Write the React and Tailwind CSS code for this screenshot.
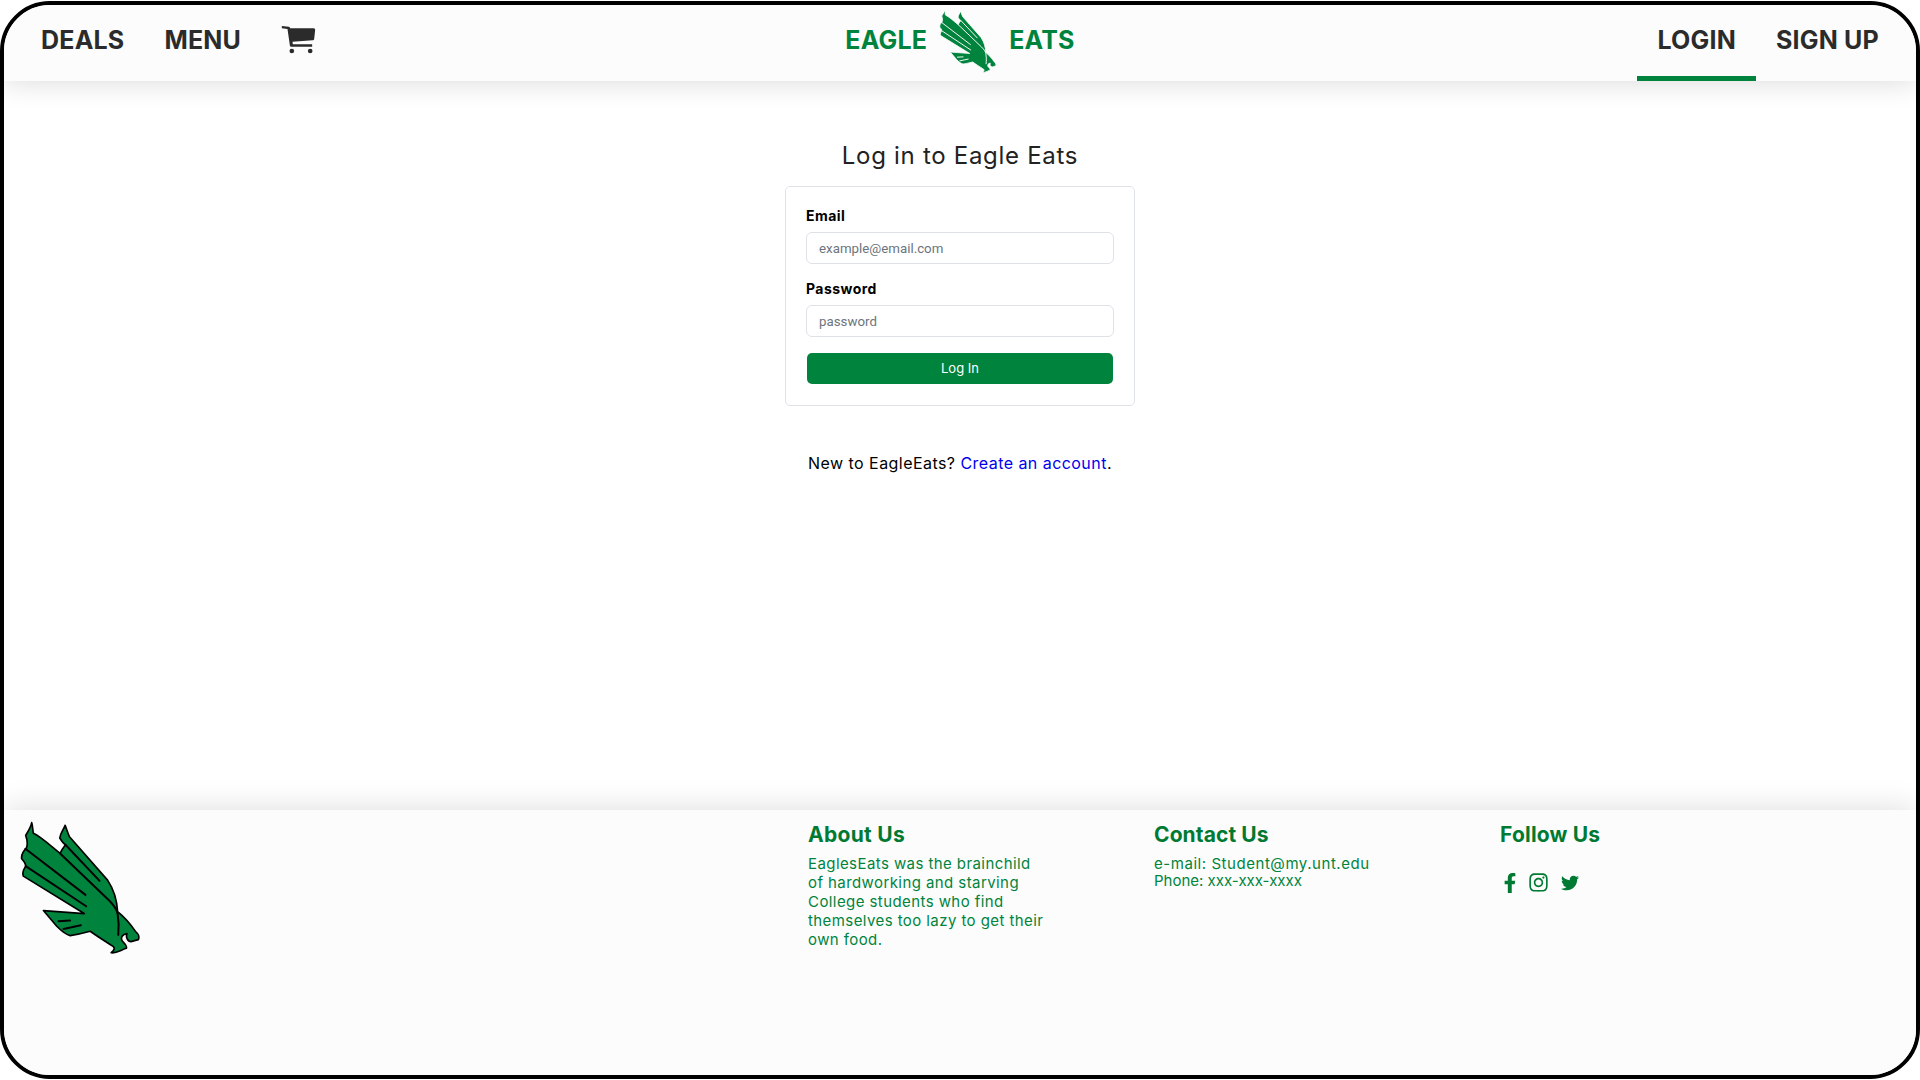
import React from 'react';
import { FaFacebookF, FaInstagram, FaTwitter } from 'react-icons/fa';

const bodyPath =
  'M65 20 C62 35 55 45 47 58 C52 72 54 84 49 96 C40 105 33 115 35 128 C42 136 47 142 47 150 C40 160 36 170 40 180 L222 292 L100 283 L140 330 C152 342 165 355 180 358 C200 355 222 350 240 345 C258 358 280 372 302 386 C314 392 316 398 303 409 C316 412 330 402 348 396 C352 390 344 382 336 374 C330 364 336 354 350 352 C346 362 352 376 362 376 L384 370 C388 362 384 352 376 346 C362 325 342 302 322 286 C320 250 312 222 292 192 L178 62 C172 50 170 40 165 28 C160 42 150 52 149 66 C155 76 162 84 166 86 C160 94 154 102 150 112 C120 88 92 62 70 52 C68 42 68 30 65 20 Z';

const Eagle = ({ className, lineClass }) => (
  <svg viewBox="30 15 362 398" className={className}>
    <path d={bodyPath} fill="#00843d" className={lineClass} strokeWidth="5" strokeLinejoin="round" />
    <g fill="none" className={lineClass} strokeWidth="6" strokeLinecap="round">
      <path d="M46 98 L226 236" />
      <path d="M47 150 L228 270" />
      <path d="M150 112 L296 252 C312 268 320 280 322 292 C326 315 326 335 324 356" />
      <path d="M166 86 L268 194" />
      <path d="M145 315 L180 313" />
      <path d="M160 338 L212 327" />
    </g>
  </svg>
);

const CartIcon = () => (
  <svg viewBox="0 0 110 90" className="w-[37px] h-[30px] fill-[#2b2b2b]">
    <path d="M5 3 L26 5 C29 6 30 8 30 10 L100 10 C104 10 105 13 105 15 L102 42 C101 45 100 46 97 46 L37 50 L38 58 L96 58 L96 65 L33 65 C30 65 29 63 29 61 L22 12 L5 10 Z" />
    <circle cx="35" cy="78" r="7" />
    <circle cx="90" cy="78" r="7" />
  </svg>
);

const NavLink = ({ children, active }) => (
  <a
    href="#"
    className={`flex items-center h-full px-5 pt-px text-[25px] font-bold tracking-[0.2px] text-[#2b2b2b] border-b-[5px] ${
      active ? 'border-[#00843d]' : 'border-transparent'
    }`}
  >
    {children}
  </a>
);

const Field = ({ label, placeholder, type }) => (
  <div>
    <label className="block text-[14px] leading-[20px] font-bold tracking-[0.45px] text-black mb-[6px]">{label}</label>
    <input
      type={type}
      placeholder={placeholder}
      className="block w-full h-[32px] px-3 text-[13.3px] bg-white border border-[#dee2e6] rounded-[6px] placeholder:text-[#6c757d] font-['Roboto',sans-serif]"
    />
  </div>
);

export default function App() {
  return (
    <div className="w-full h-screen bg-white py-px font-['Inter',sans-serif]">
      <div className="h-full flex flex-col border-[4px] border-black rounded-[50px] overflow-hidden bg-white">
        {/* Header */}
        <header className="relative z-10 grid grid-cols-[1fr_auto_1fr] items-center h-[76px] bg-[#fcfcfc] shadow-[0_0_30px_rgba(0,0,0,0.16)]">
          <nav className="flex items-center h-full pl-[17px]">
            <NavLink>DEALS</NavLink>
            <NavLink>MENU</NavLink>
            <a href="#" className="pl-[19px] pb-[6px]">
              <CartIcon />
            </a>
          </nav>
          <div className="flex items-center gap-3 pb-[4px] text-[25px] font-bold tracking-[0.2px] text-[#00843d]">
            <span>EAGLE</span>
            <Eagle className="w-[58px] h-[64px]" lineClass="stroke-[#fcfcfc]" />
            <span>EATS</span>
          </div>
          <nav className="flex items-center justify-end h-full pr-[17px]">
            <NavLink active>LOGIN</NavLink>
            <NavLink>SIGN UP</NavLink>
          </nav>
        </header>

        {/* Login form */}
        <main className="flex-1 flex flex-col items-center pt-[58px] bg-white">
          <h1 className="text-[24px] leading-[34px] tracking-[0.7px] text-[#222222] mb-[13px]">Log in to Eagle Eats</h1>
          <form className="w-[350px] h-[220px] px-[20px] pt-[19px] bg-white border border-[#dee2e6] rounded-[5px] flex flex-col gap-[15px]">
            <Field label="Email" placeholder="example@email.com" type="email" />
            <Field label="Password" placeholder="password" type="password" />
            <button type="button" className="h-[31px] mx-px mt-[1px] bg-[#00843d] text-white text-[13px] rounded-[5px]">
              Log In
            </button>
          </form>
          <p className="mt-[46px] text-[16px] leading-[22px] tracking-[0.45px] text-black">
            New to EagleEats? <a href="#" className="text-[#0000ee]">Create an account</a>.
          </p>
        </main>

        {/* Footer */}
        <footer className="relative flex h-[265px] bg-[#fcfcfc] shadow-[0_0_30px_rgba(0,0,0,0.14)]">
          <div className="w-[804px] pl-[16px] pt-[11px]">
            <Eagle className="w-[121px] h-[133px]" lineClass="stroke-black" />
          </div>
          <div className="w-[346px] pt-[12px]">
            <h3 className="text-[21px] leading-[26px] font-bold tracking-[0.3px] text-[#007a33] mb-[6px]">About Us</h3>
            <p className="text-[15px] leading-[19px] tracking-[0.42px] text-[#00843d]">
              EaglesEats was the brainchild<br />
              of hardworking and starving<br />
              College students who find<br />
              themselves too lazy to get their<br />
              own food.
            </p>
          </div>
          <div className="w-[346px] pt-[12px]">
            <h3 className="text-[21px] leading-[26px] font-bold tracking-[0.1px] text-[#007a33] mb-[7px]">Contact Us</h3>
            <p className="text-[15px] leading-[17px] text-[#00843d]">
              <span className="tracking-[0.55px]">e-mail: Student@my.unt.edu</span><br />
              Phone: xxx-xxx-xxxx
            </p>
          </div>
          <div className="pt-[12px]">
            <h3 className="text-[21px] leading-[26px] font-bold tracking-[0.2px] text-[#007a33] mb-[24px]">Follow Us</h3>
            <div className="flex items-center text-[#007a33]">
              <FaFacebookF size={20} />
              <FaInstagram size={21} className="ml-[8px]" />
              <FaTwitter size={18} className="ml-[12px]" />
            </div>
          </div>
        </footer>
      </div>
    </div>
  );
}
